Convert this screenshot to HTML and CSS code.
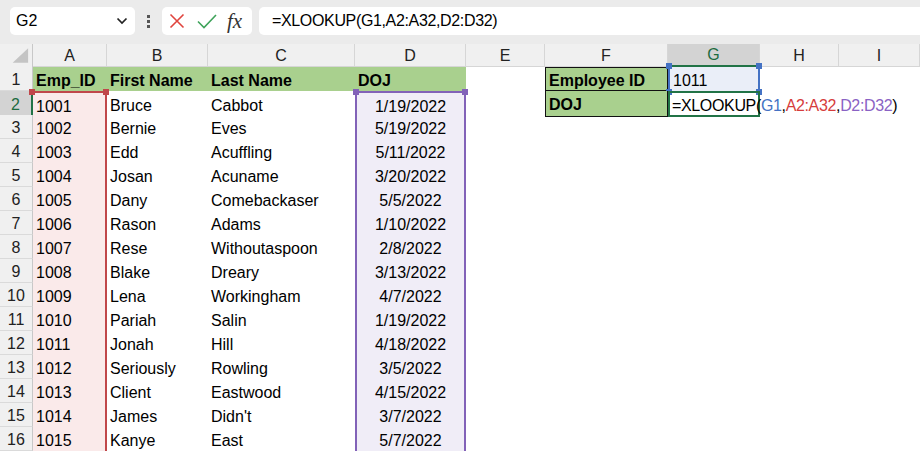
FILE: index.html
```html
<!DOCTYPE html>
<html lang="en">
<head>
    <meta charset="UTF-8">
    <title>XLOOKUP DOJ</title>
    <link rel="stylesheet" href="styles.css">
</head>
<body>
    <div class="toolbar">
        <div class="name-box">
            <span>G2</span>
            <svg width="12" height="8" viewBox="0 0 12 8"><path d="M1.5 1.5 L6 6 L10.5 1.5" fill="none" stroke="#222" stroke-width="1.7"/></svg>
        </div>
        <div class="grip"><i></i><i></i><i></i></div>
        <div class="fx-box">
            <svg class="cancel" width="16" height="16" viewBox="0 0 16 16"><path d="M1.5 1.5 L14.5 14.5 M14.5 1.5 L1.5 14.5" stroke="#e0443e" stroke-width="1.6" fill="none"/></svg>
            <svg class="enter" width="20" height="15" viewBox="0 0 20 15"><path d="M1 7.5 L7 13.5 L19 1" stroke="#3fa35b" stroke-width="1.6" fill="none"/></svg>
            <span class="fx">fx</span>
        </div>
        <div class="formula">=XLOOKUP(G1,A2:A32,D2:D32)</div>
    </div>

    <div class="sheet">
        <div class="row head">
            <div class="c corner"><svg width="33" height="23" viewBox="0 0 33 23"><polygon points="13,19 29,19 29,4" fill="#c4c4c4"/></svg></div>
            <div class="c ch">A</div>
            <div class="c ch">B</div>
            <div class="c ch">C</div>
            <div class="c ch">D</div>
            <div class="c ch">E</div>
            <div class="c ch">F</div>
            <div class="c ch sel">G</div>
            <div class="c ch">H</div>
            <div class="c ch">I</div>
        </div>
        <div class="row">
            <div class="c rh">1</div>
            <div class="c hd">Emp_ID</div>
            <div class="c hd">First Name</div>
            <div class="c hd">Last Name</div>
            <div class="c hd">DOJ</div>
            <div class="c"></div>
            <div class="c lbl">Employee ID</div>
            <div class="c ref-g">1011<b class="h hb tl"></b><b class="h hb tr"></b><b class="h hb bl"></b><b class="h hb br"></b></div>
        </div>
        <div class="row">
            <div class="c rh sel">2</div>
            <div class="c ra top">1001<b class="h hr tl"></b><b class="h hr tr"></b></div>
            <div class="c">Bruce</div>
            <div class="c">Cabbot</div>
            <div class="c rd top">1/19/2022<b class="h hp tl"></b><b class="h hp tr"></b></div>
            <div class="c"></div>
            <div class="c lbl second">DOJ</div>
            <div class="c active">=XLOOKUP(<span class="blue">G1</span>,<span class="red">A2:A32</span>,<span class="purple">D2:D32</span>)<span class="caret"></span></div>
        </div>
        <div class="row"><div class="c rh">3</div><div class="c ra">1002</div><div class="c">Bernie</div><div class="c">Eves</div><div class="c rd">5/19/2022</div></div>
        <div class="row"><div class="c rh">4</div><div class="c ra">1003</div><div class="c">Edd</div><div class="c">Acuffling</div><div class="c rd">5/11/2022</div></div>
        <div class="row"><div class="c rh">5</div><div class="c ra">1004</div><div class="c">Josan</div><div class="c">Acuname</div><div class="c rd">3/20/2022</div></div>
        <div class="row"><div class="c rh">6</div><div class="c ra">1005</div><div class="c">Dany</div><div class="c">Comebackaser</div><div class="c rd">5/5/2022</div></div>
        <div class="row"><div class="c rh">7</div><div class="c ra">1006</div><div class="c">Rason</div><div class="c">Adams</div><div class="c rd">1/10/2022</div></div>
        <div class="row"><div class="c rh">8</div><div class="c ra">1007</div><div class="c">Rese</div><div class="c">Withoutaspoon</div><div class="c rd">2/8/2022</div></div>
        <div class="row"><div class="c rh">9</div><div class="c ra">1008</div><div class="c">Blake</div><div class="c">Dreary</div><div class="c rd">3/13/2022</div></div>
        <div class="row"><div class="c rh">10</div><div class="c ra">1009</div><div class="c">Lena</div><div class="c">Workingham</div><div class="c rd">4/7/2022</div></div>
        <div class="row"><div class="c rh">11</div><div class="c ra">1010</div><div class="c">Pariah</div><div class="c">Salin</div><div class="c rd">1/19/2022</div></div>
        <div class="row"><div class="c rh">12</div><div class="c ra">1011</div><div class="c">Jonah</div><div class="c">Hill</div><div class="c rd">4/18/2022</div></div>
        <div class="row"><div class="c rh">13</div><div class="c ra">1012</div><div class="c">Seriously</div><div class="c">Rowling</div><div class="c rd">3/5/2022</div></div>
        <div class="row"><div class="c rh">14</div><div class="c ra">1013</div><div class="c">Client</div><div class="c">Eastwood</div><div class="c rd">4/15/2022</div></div>
        <div class="row"><div class="c rh">15</div><div class="c ra">1014</div><div class="c">James</div><div class="c">Didn't</div><div class="c rd">3/7/2022</div></div>
        <div class="row"><div class="c rh">16</div><div class="c ra">1015</div><div class="c">Kanye</div><div class="c">East</div><div class="c rd">5/7/2022</div></div>
    </div>
</body>
</html>
```

FILE: styles.css
```css
body {
    margin: 0;
    font-family: "Liberation Sans", Arial, sans-serif;
    font-size: 16px;
    color: #000;
    background: #fff;
    overflow: hidden;
}

/* formula bar */
.toolbar {
    display: flex;
    align-items: flex-start;
    height: 44px;
    box-sizing: border-box;
    padding: 7px 0 0 10px;
    background: #ebebeb;
}
.name-box {
    width: 125px;
    height: 28px;
    box-sizing: border-box;
    padding: 0 7px 0 6px;
    display: flex;
    align-items: center;
    justify-content: space-between;
    background: #fff;
    border-radius: 5px;
}
.grip {
    width: 27px;
    height: 28px;
    display: flex;
    flex-direction: column;
    align-items: center;
    justify-content: center;
    gap: 2px;
}
.grip i {
    width: 3px;
    height: 3px;
    background: #555;
}
.fx-box {
    width: 90px;
    height: 28px;
    box-sizing: border-box;
    padding-left: 7px;
    display: flex;
    align-items: center;
    background: #fff;
    border-radius: 5px;
}
.fx-box .enter {
    margin-left: 12px;
}
.fx-box .fx {
    margin-left: 10px;
    font-family: "Liberation Serif", "Times New Roman", serif;
    font-style: italic;
    font-size: 21px;
    color: #333;
}
.formula {
    flex: 1;
    height: 28px;
    margin-left: 7px;
    padding-left: 13px;
    display: flex;
    align-items: center;
    background: #fff;
    border-radius: 5px 0 0 5px;
    letter-spacing: -0.35px;
}

/* grid */
.sheet {
    --cols: 33px 74px 101px 147px 111px 79px 123px 92px 79px 81px;
}
.row {
    display: grid;
    grid-template-columns: var(--cols);
    height: 24px;
}
.row.head {
    height: 23px;
    background: #f0f0f0;
}
.c {
    position: relative;
    display: flex;
    align-items: center;
    min-width: 0;
    padding: 3px 3px 0;
    box-sizing: border-box;
    white-space: nowrap;
}
.corner {
    padding: 0;
    border-right: 1px solid #c8c8c8;
}
.ch {
    justify-content: center;
    padding-top: 1px;
    color: #222;
    border-right: 1px solid #d6d6d6;
    border-bottom: 1px solid #d6d6d6;
}
.ch.sel {
    background: #d3d3d3;
    color: #1d6b3f;
    border-bottom: 2px solid #217346;
}
.rh {
    justify-content: center;
    padding: 3px 0 0;
    color: #222;
    background: #f0f0f0;
    border-right: 1px solid #c8c8c8;
    border-bottom: 1px solid #dadada;
}
.rh.sel {
    background: #d3d3d3;
    color: #1d6b3f;
    border-right: 2px solid #217346;
}
.hd {
    background: #a9d08e;
    font-weight: bold;
}
.lbl {
    background: #a9d08e;
    font-weight: bold;
    border: 1px solid #111;
}
.lbl.second {
    border-top: 0;
}

/* reference ranges */
.ra {
    background: #faeaea;
    border-right: 2px solid #c0474a;
}
.rd {
    justify-content: center;
    background: #f0edf7;
    border-left: 2px solid #8262b8;
    border-right: 2px solid #8262b8;
}
.ra.top {
    border-top: 2px solid #c0474a;
}
.rd.top {
    border-top: 2px solid #8262b8;
}
.ref-g {
    background: #eaeef8;
    border-left: 2px solid #4472c4;
    border-right: 2px solid #4472c4;
}
.active {
    border: 2px solid #217346;
    padding-left: 2px;
    letter-spacing: -0.35px;
}
.h {
    position: absolute;
    width: 6px;
    height: 6px;
}
.h.tl { top: -4px; left: -4px; }
.h.tr { top: -4px; right: -4px; }
.h.bl { bottom: -4px; left: -4px; }
.h.br { bottom: -4px; right: -4px; }
.hr { background: #c0474a; }
.hp { background: #8262b8; }
.hb { background: #4472c4; }

.blue { color: #4472c4; }
.red { color: #d63c3c; }
.purple { color: #8a62c4; }
.caret {
    display: inline-block;
    width: 1px;
    height: 19px;
    margin-left: 3px;
    background: #000;
}
```
